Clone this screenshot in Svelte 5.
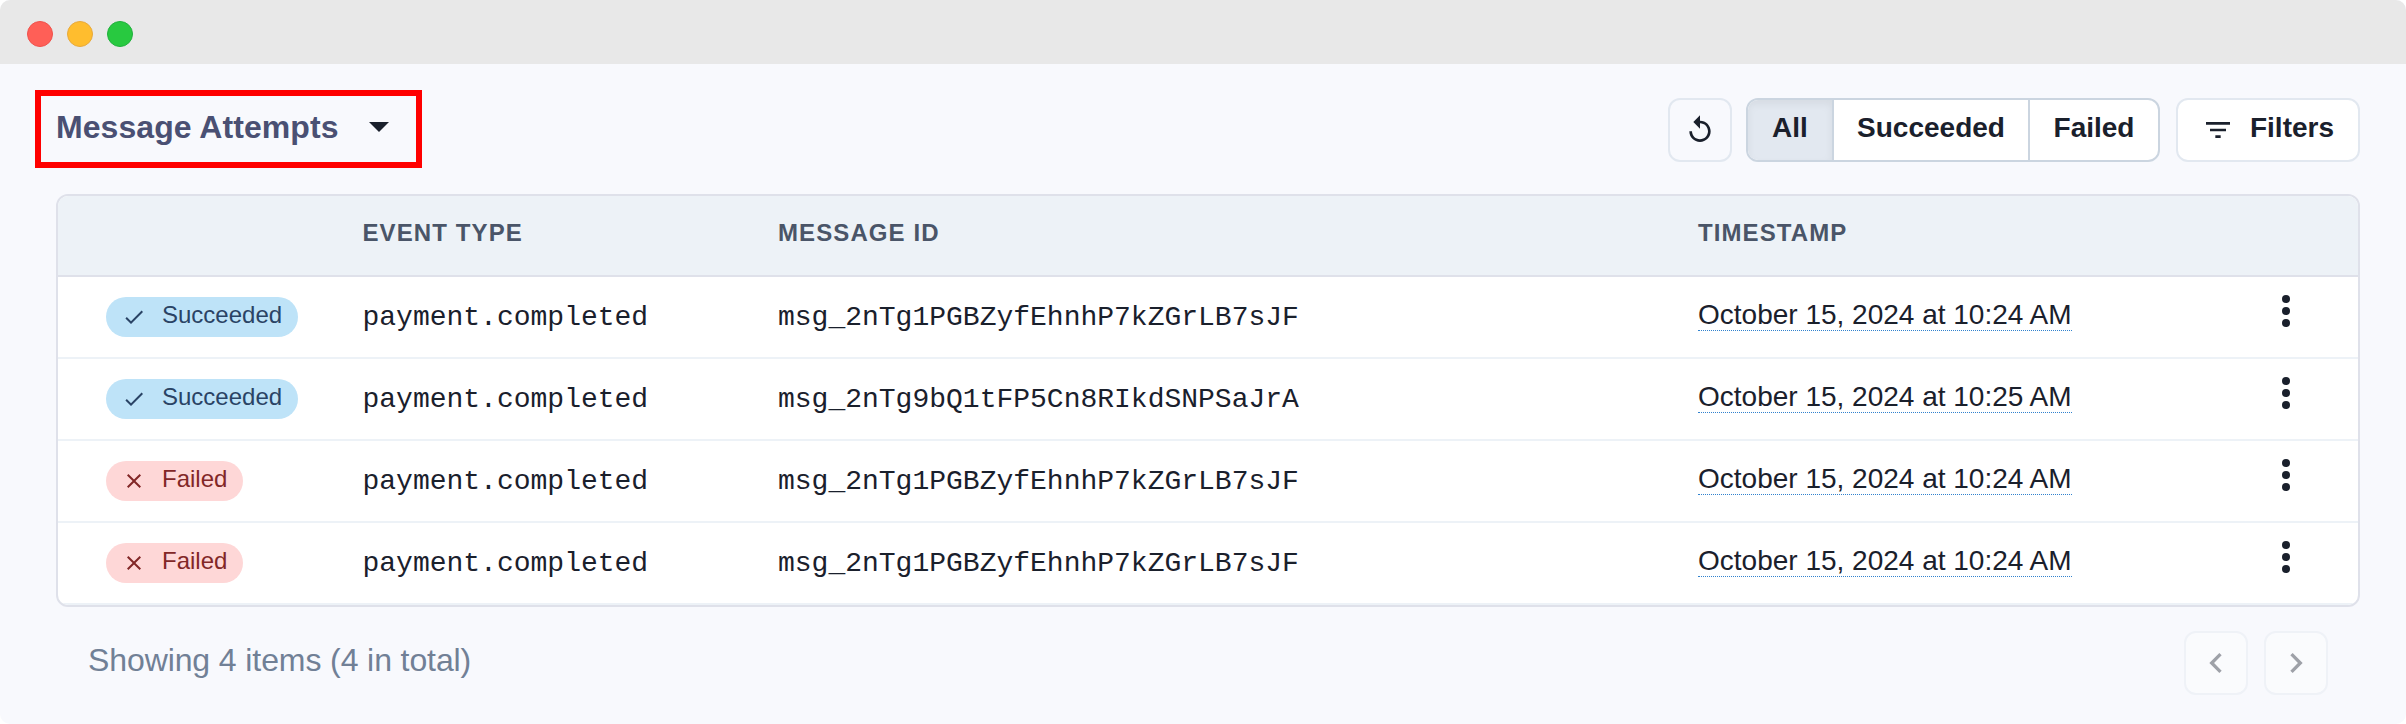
<script lang="ts">
	type Status = 'succeeded' | 'failed';

	interface Attempt {
		status: Status;
		eventType: string;
		messageId: string;
		timestamp: string;
	}

	const attempts: Attempt[] = [
		{
			status: 'succeeded',
			eventType: 'payment.completed',
			messageId: 'msg_2nTg1PGBZyfEhnhP7kZGrLB7sJF',
			timestamp: 'October 15, 2024 at 10:24 AM'
		},
		{
			status: 'succeeded',
			eventType: 'payment.completed',
			messageId: 'msg_2nTg9bQ1tFP5Cn8RIkdSNPSaJrA',
			timestamp: 'October 15, 2024 at 10:25 AM'
		},
		{
			status: 'failed',
			eventType: 'payment.completed',
			messageId: 'msg_2nTg1PGBZyfEhnhP7kZGrLB7sJF',
			timestamp: 'October 15, 2024 at 10:24 AM'
		},
		{
			status: 'failed',
			eventType: 'payment.completed',
			messageId: 'msg_2nTg1PGBZyfEhnhP7kZGrLB7sJF',
			timestamp: 'October 15, 2024 at 10:24 AM'
		}
	];

	const filters = [
		{ id: 'all', label: 'All' },
		{ id: 'succeeded', label: 'Succeeded' },
		{ id: 'failed', label: 'Failed' }
	];

	let filter = $state('all');
	let visible = $derived(filter === 'all' ? attempts : attempts.filter((a) => a.status === filter));
</script>

<div class="window">
	<header class="titlebar">
		<span class="light red"></span>
		<span class="light yellow"></span>
		<span class="light green"></span>
	</header>

	<main>
		<div class="toolbar">
			<button type="button" class="heading">
				Message Attempts
				<svg width="40" height="40" viewBox="0 0 24 24"><path d="M6 9l6 6 6-6z" /></svg>
			</button>

			<div class="actions">
				<button type="button" class="btn refresh" aria-label="Refresh">
					<svg width="32" height="32" viewBox="0 0 24 24">
						<path
							d="M12 5V1L7 6l5 5V7c3.31 0 6 2.69 6 6s-2.69 6-6 6-6-2.69-6-6H4c0 4.42 3.58 8 8 8s8-3.58 8-8-3.58-8-8-8z"
						/>
					</svg>
				</button>

				<div class="group">
					{#each filters as f (f.id)}
						<button type="button" class:active={filter === f.id} onclick={() => (filter = f.id)}>
							{f.label}
						</button>
					{/each}
				</div>

				<button type="button" class="btn filters">
					<svg width="32" height="32" viewBox="0 0 24 24">
						<path d="M10 18h4v-2h-4v2zM3 6v2h18V6H3zm3 7h12v-2H6v2z" />
					</svg>
					<span>Filters</span>
				</button>
			</div>
		</div>

		<div class="table">
			<div class="row head">
				<span></span>
				<span>Event type</span>
				<span>Message ID</span>
				<span>Timestamp</span>
				<span></span>
			</div>
			{#each visible as a}
				<div class="row">
					<div>
						<span class="badge {a.status}">
							<svg width="24" height="24" viewBox="0 0 24 24">
								{#if a.status === 'succeeded'}
									<path d="M9 16.17L4.83 12l-1.42 1.41L9 19 21 7l-1.41-1.41z" />
								{:else}
									<path
										d="M19 6.41L17.59 5 12 10.59 6.41 5 5 6.41 10.59 12 5 17.59 6.41 19 12 13.41 17.59 19 19 17.59 13.41 12z"
									/>
								{/if}
							</svg>
							<span class="label">{a.status}</span>
						</span>
					</div>
					<div class="mono">{a.eventType}</div>
					<div class="mono">{a.messageId}</div>
					<div class="time"><span>{a.timestamp}</span></div>
					<button type="button" class="more" aria-label="More">
						<svg width="8" height="32" viewBox="0 0 8 32">
							<circle cx="4" cy="4" r="4" />
							<circle cx="4" cy="16" r="4" />
							<circle cx="4" cy="28" r="4" />
						</svg>
					</button>
				</div>
			{/each}
		</div>

		<footer>
			<span class="count">Showing {visible.length} items ({attempts.length} in total)</span>
			<div class="pager">
				<button type="button" class="btn" disabled aria-label="Previous page">
					<svg width="40" height="40" viewBox="0 0 24 24">
						<path d="M15.41 7.41L14 6l-6 6 6 6 1.41-1.41L10.83 12z" />
					</svg>
				</button>
				<button type="button" class="btn" disabled aria-label="Next page">
					<svg width="40" height="40" viewBox="0 0 24 24">
						<path d="M10 6L8.59 7.41 13.17 12l-4.58 4.59L10 18l6-6z" />
					</svg>
				</button>
			</div>
		</footer>
	</main>
</div>

<style>
	:global(body) {
		margin: 0;
		background: #fff;
	}

	.window {
		box-sizing: border-box;
		height: 724px;
		border-radius: 10px;
		overflow: hidden;
		background: #f8f9fd;
		color: #1a202c;
		font-family: 'Liberation Sans', Arial, sans-serif;
		font-size: 28px;
	}

	button {
		margin: 0;
		padding: 0;
		border: 0;
		background: none;
		font: inherit;
		color: inherit;
	}

	svg {
		display: block;
		flex: none;
		fill: currentColor;
	}

	.titlebar {
		display: flex;
		align-items: center;
		gap: 14px;
		height: 64px;
		box-sizing: border-box;
		padding: 4px 27px 0;
		background: #e8e8e8;
	}

	.light {
		box-sizing: border-box;
		width: 26px;
		height: 26px;
		border-radius: 50%;
	}

	.red {
		background: #ff5f57;
		border: 1px solid #f0504b;
	}

	.yellow {
		background: #ffbd2e;
		border: 1px solid #e8a93a;
	}

	.green {
		background: #28c940;
		border: 1px solid #1fb13c;
	}

	main {
		padding: 26px 46px 0 56px;
	}

	.toolbar {
		display: flex;
		justify-content: space-between;
		height: 104px;
	}

	.heading {
		display: flex;
		align-items: center;
		gap: 20px;
		box-sizing: border-box;
		width: 387px;
		height: 78px;
		margin-left: -21px;
		padding: 0 0 4px 15px;
		border: 6px solid #f00;
		font-size: 32px;
		font-weight: 700;
		letter-spacing: 0.06px;
		color: #4a5073;
	}

	.heading svg {
		fill: #1a202c;
	}

	.actions {
		display: flex;
		gap: 16px;
		height: 64px;
		padding-top: 8px;
		font-weight: 700;
	}

	.btn {
		display: flex;
		align-items: center;
		justify-content: center;
		box-sizing: border-box;
		width: 64px;
		height: 64px;
		border: 2px solid #e2e8f0;
		border-radius: 12px;
		background: #fff;
	}

	.refresh {
		margin-right: -2px;
		background: #f8f9fd;
	}

	.filters {
		width: 184px;
		gap: 16px;
	}

	.filters span {
		padding-bottom: 4px;
	}

	.group {
		display: grid;
		grid-template-columns: 84px 196px 130px;
		box-sizing: border-box;
		height: 64px;
		border: 2px solid #cbd5e0;
		border-radius: 12px;
		overflow: hidden;
		background: #fff;
	}

	.group button {
		padding-bottom: 4px;
	}

	.group button + button {
		border-left: 2px solid #cbd5e0;
	}

	.group .active {
		background: #e2e8f0;
		box-shadow: inset 0 4px 8px rgba(0, 0, 0, 0.06);
	}

	.table {
		border: 2px solid #dfe1ea;
		border-radius: 12px;
		overflow: hidden;
		background: #fff;
	}

	.row {
		display: grid;
		grid-template-columns: 256.5px 415.5px 1fr 584px 76px;
		align-items: center;
		box-sizing: border-box;
		height: 82px;
		padding-left: 48px;
		border-bottom: 2px solid #edf2f7;
	}

	.head {
		height: 81px;
		padding-bottom: 5px;
		border-bottom-color: #dfe1ea;
		background: #edf2f7;
		color: #4a5568;
		font-size: 24px;
		font-weight: 700;
		letter-spacing: 1.1px;
		text-transform: uppercase;
	}

	.badge {
		display: inline-flex;
		align-items: center;
		gap: 16px;
		height: 40px;
		padding: 0 16px;
		border-radius: 20px;
		font-size: 24px;
		vertical-align: middle;
	}

	.badge .label {
		padding-bottom: 5px;
		text-transform: capitalize;
	}

	.succeeded {
		background: #bee3f8;
		color: #2a4365;
	}

	.failed {
		background: #fed7d7;
		color: #822727;
	}

	.mono {
		font-family: 'Liberation Mono', monospace;
	}

	.time {
		padding-bottom: 4px;
	}

	.time span {
		border-bottom: 1px dotted #3182ce;
	}

	.more {
		width: 8px;
		margin-bottom: 12px;
	}

	footer {
		display: flex;
		align-items: flex-start;
		justify-content: space-between;
		padding: 24px 32px 0;
		font-size: 32px;
		color: #718096;
	}

	.count {
		padding-top: 11px;
		letter-spacing: -0.1px;
	}

	.pager {
		display: flex;
		gap: 16px;
		color: #1a202c;
	}

	.pager .btn {
		opacity: 0.4;
	}
</style>
